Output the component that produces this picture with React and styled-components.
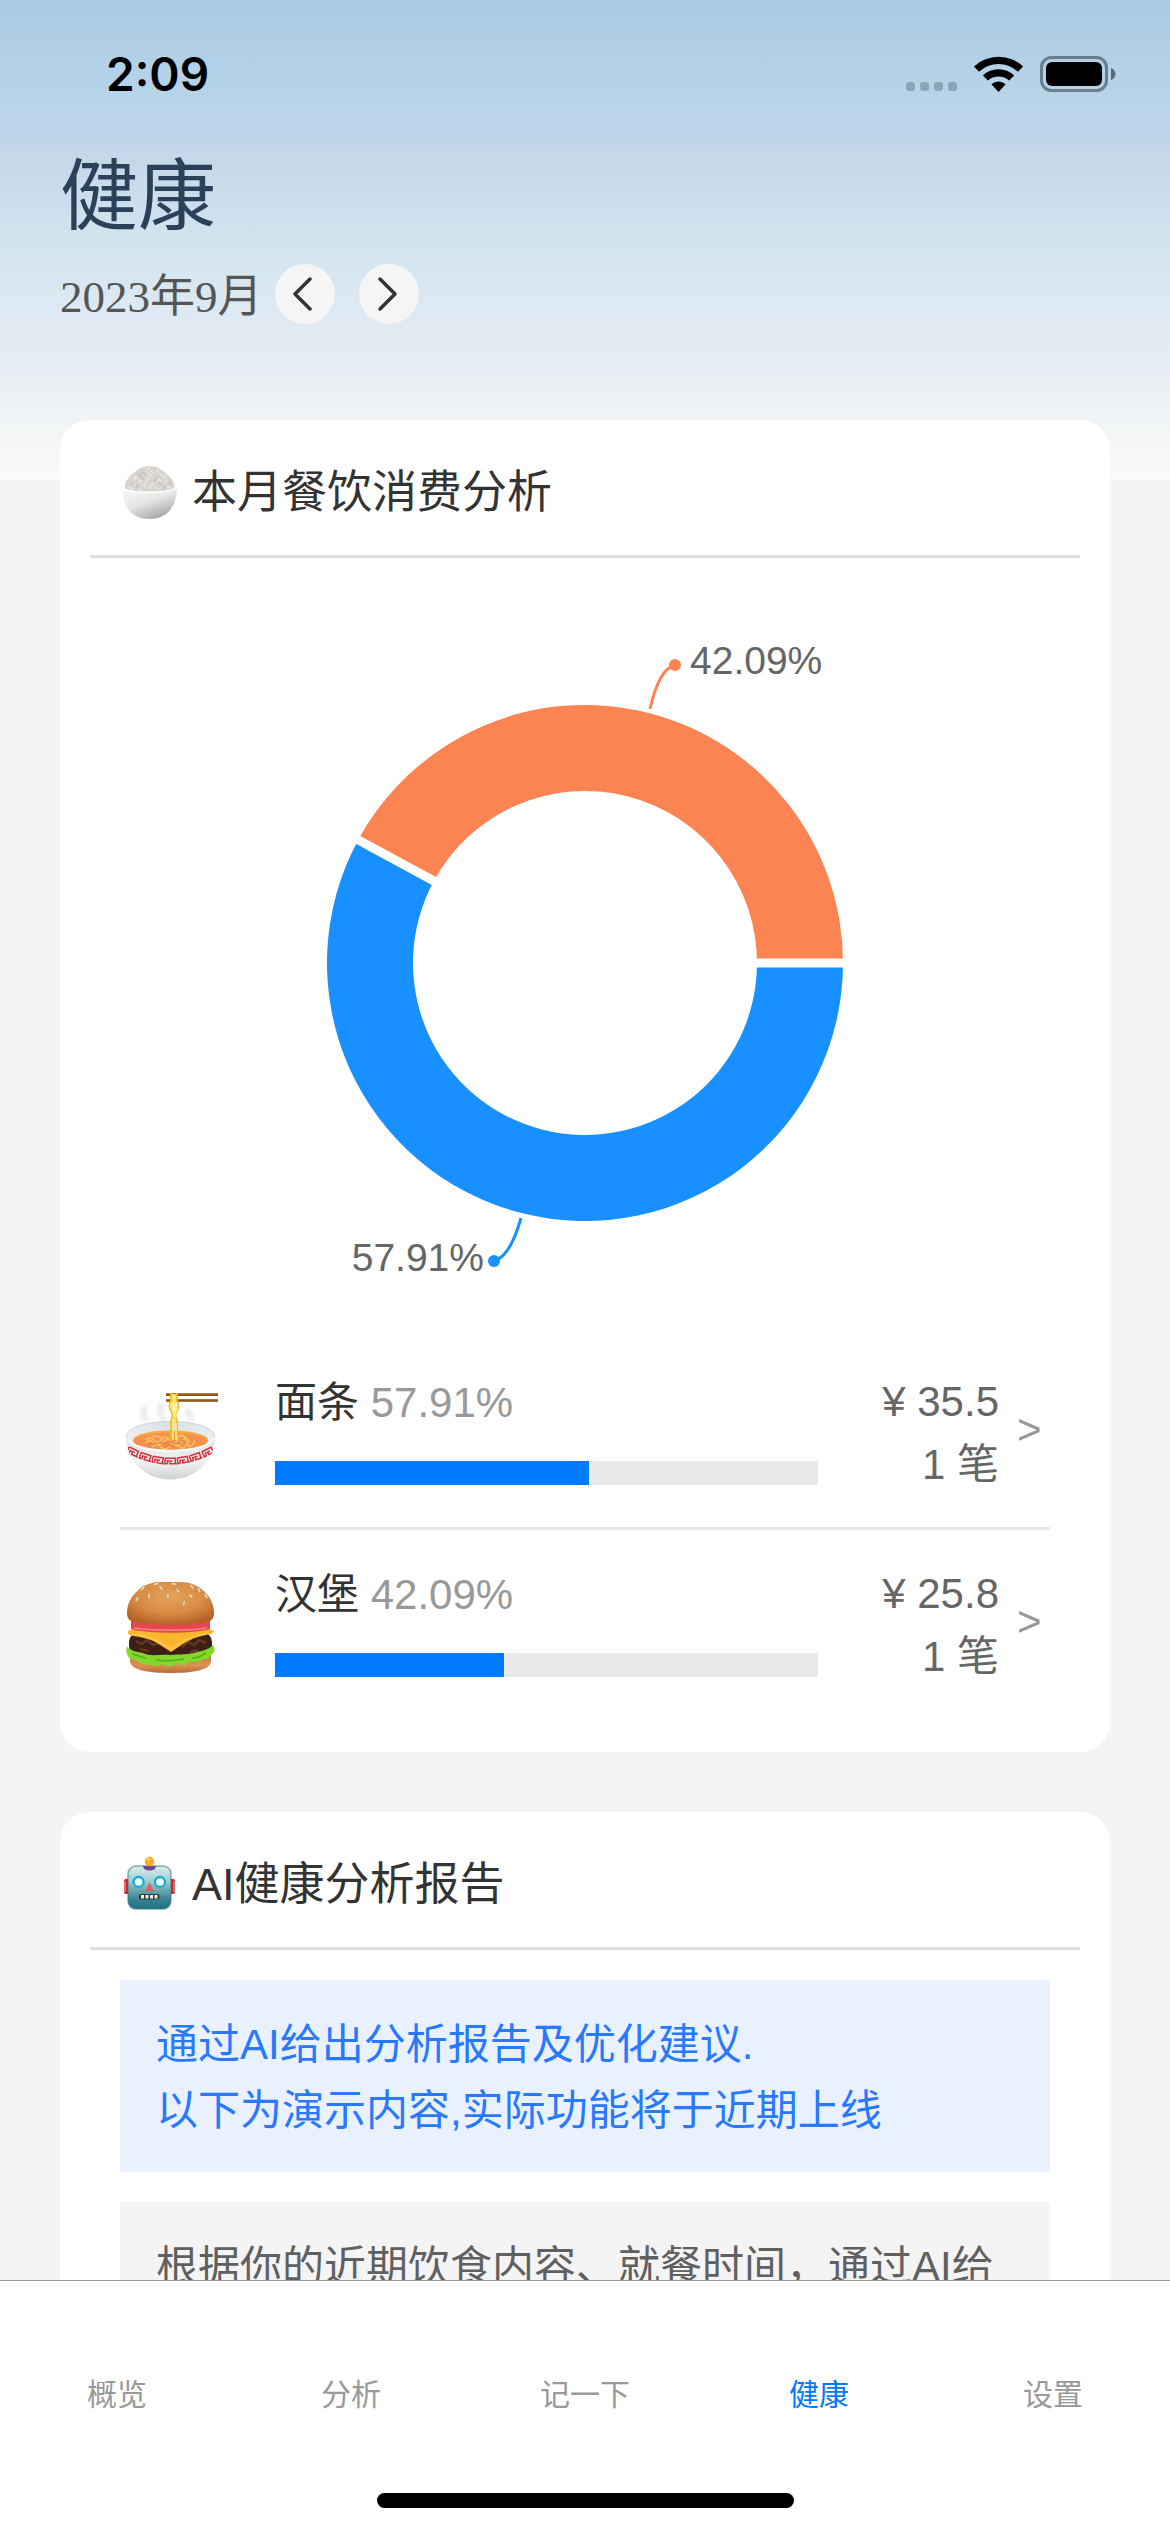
import React from 'react';
import styled, { createGlobalStyle } from 'styled-components';

const sans = `"Liberation Sans", "Noto Sans CJK SC", sans-serif`;

const GlobalStyle = createGlobalStyle`
  * { box-sizing: border-box; }
  body {
    margin: 0;
    background: #f4f4f4;
    font-family: ${sans};
    font-weight: 400;
  }
  h1, h2, p, ul { margin: 0; padding: 0; font-weight: inherit; }
  ul { list-style: none; }
  a { color: inherit; text-decoration: none; }
  svg { display: block; flex: none; }
`;

const Screen = styled.div`
  display: flex;
  flex-direction: column;
  height: 100vh;
`;

const Content = styled.main`
  flex: 1;
  min-height: 0;
  overflow-y: auto;
  scrollbar-width: none;
  padding: 0 60px 60px;
  background: linear-gradient(#a9cae4, #b7d4e9 20%, #bfd4ea 27%, #c4d8e8 33%, #d1e4ef 50%, #e2ebf4 71%, #e7edf6 77%, #ecf0f3 81%, #fafafa) 0 0 / 100% 480px no-repeat;
`;

const StatusBar = styled.div`
  display: flex;
  align-items: center;
  justify-content: space-between;
  height: 148px;
  margin: 0 -6px 0 46px;
`;

const Time = styled.time`
  font: 600 46px/60px Inter, sans-serif;
  color: #000;
`;

const StatusIcons = styled.div`
  display: flex;
  align-items: center;
  gap: 17px;
`;

const Title = styled.h1`
  padding-top: 3px;
  font-size: 78px;
  line-height: 92px;
  color: #2b4059;
`;

const MonthRow = styled.div`
  display: flex;
  align-items: center;
  margin: 21px 0 96px;
  gap: 24px;
`;

const Month = styled.span`
  margin-right: -12px;
  padding-top: 6px;
  font: 45px/54px "Liberation Serif", "Noto Sans CJK SC", serif;
  color: #555;
`;

const RoundButton = styled.button`
  display: flex;
  align-items: center;
  justify-content: center;
  width: 60px;
  height: 60px;
  padding: 0;
  border: 0;
  border-radius: 50%;
  background: #f5f5f5;
`;

const Card = styled.section`
  margin-bottom: 60px;
  padding: 0 30px 33px;
  border-radius: 30px;
  background: #fff;
`;

const CardHeader = styled.header`
  display: flex;
  align-items: center;
  gap: 12px;
  padding: 42px 30px 33px;
  border-bottom: 3px solid #ddd;
`;

const CardTitle = styled.h2`
  padding-top: 2px;
  font-size: 45px;
  line-height: 58px;
  color: #333;
`;

const CardBody = styled.div`
  padding: 0 30px;
`;

const Chart = styled.svg`
  width: 100%;
  height: auto;
  text {
    font-size: 39px;
    fill: #666;
  }
`;

const FoodItem = styled.li`
  & + & { border-top: 3px solid #e8e8e8; }
`;

const FoodLink = styled.a`
  display: flex;
  align-items: center;
  height: 189px;
  font-size: 42px;
  line-height: 63px;
  color: #666;
`;

const FoodMain = styled.div`
  flex: 1;
  margin-left: 55px;
  padding-bottom: 9px;
`;

const FoodName = styled.p`
  margin-bottom: 27px;
  color: #333;
`;

const Percent = styled.span`
  color: #999;
`;

const Track = styled.div`
  height: 24px;
  background: #eaeaea;
`;

const Fill = styled.div`
  height: 100%;
  background: #007aff;
`;

const Amount = styled.div`
  width: 181px;
  text-align: right;
`;

const More = styled.span`
  width: 51px;
  padding: 0 0 6px 18px;
  color: #999;
`;

const Note = styled.p`
  margin-top: 30px;
  padding: 32px 36px 28px;
  font-size: 42px;
  line-height: 66px;
  color: ${(p) => (p.$info ? '#2979ff' : '#606060')};
  background: ${(p) => (p.$info ? '#e9f1ff' : '#f4f4f4')};
`;

const TabBar = styled.nav`
  border-top: 1px solid #999;
  background: #fff;
`;

const Tabs = styled.div`
  display: flex;
  padding-top: 84px;
`;

const Tab = styled.a`
  flex: 1;
  text-align: center;
  font-size: 30px;
  line-height: 60px;
  color: ${(p) => (p.$active ? '#007aff' : '#999')};
`;

const HomeIndicator = styled.div`
  width: 417px;
  height: 15px;
  margin: 68px auto 24px;
  border-radius: 8px;
  background: #000;
`;

const SignalDots = () => (
  <svg width="51" height="36" fill="#000" fillOpacity="0.22">
    {[0, 14, 28, 42].map((x) => (
      <rect key={x} x={x} y="26" width="9" height="9" rx="3" />
    ))}
  </svg>
);

const Wifi = () => (
  <svg width="49" height="36" viewBox="0 0 49 36">
    <path d="M0 10.5a35.5 35.5 0 0 1 49 0l-5 5.2a28.3 28.3 0 0 0-39 0z" />
    <path d="M8.8 19.4a22.8 22.8 0 0 1 31.4 0l-5.1 5.2a15.6 15.6 0 0 0-21.2 0z" />
    <path d="M17.4 28.2a10.6 10.6 0 0 1 14.2 0L24.500 36z" />
  </svg>
);

const Battery = () => (
  <svg width="76" height="36" viewBox="0 0 76 36">
    <rect x="1.500" y="1.500" width="65" height="33" rx="10" fill="none" stroke="#000" strokeOpacity="0.4" strokeWidth="3" />
    <rect x="6" y="6" width="56" height="24" rx="6" />
    <path d="M71 12c6 2 6 10 0 12z" fillOpacity="0.5" />
  </svg>
);

const Chevron = ({ d }) => (
  <svg width="24" height="36" fill="none" stroke="#333" strokeWidth="3.500" strokeLinecap="round" strokeLinejoin="round">
    <path d={d} />
  </svg>
);

const riceGrains = [
  [12, 20], [16, 14], [20, 19], [24, 10], [28, 16], [33, 9], [37, 15], [42, 12], [46, 19], [41, 21],
  [33, 21], [25, 23], [17, 24], [49, 24], [29, 6], [20, 12], [38, 8], [11, 25], [44, 25], [37, 25],
  [14, 17], [22, 15], [26, 20], [31, 12], [35, 18], [40, 17], [45, 15], [50, 20], [30, 25], [21, 27],
];

const RiceBowl = () => (
  <svg width="60" height="60" viewBox="0 0 60 60">
    <defs>
      <linearGradient id="rice-bowl" x1="0" y1="0" x2="0.600" y2="1">
        <stop offset="0" stopColor="#fbfbfb" />
        <stop offset="0.550" stopColor="#e6e6e6" />
        <stop offset="1" stopColor="#a8a8a8" />
      </linearGradient>
    </defs>
    <path d="M5 27C4 18 11 13 16 9c8-6 19-7 27 0 5 4 13 10 11 18-6 7-42 7-49 0z" fill="#d8d4cf" />
    {riceGrains.map(([x, y], i) => (
      <path key={i} d={i % 2 ? `M${x - 2} ${y}l3 2` : `M${x - 1} ${y + 2}l2 -3`} stroke={i % 3 ? '#efede9' : '#c2bdb6'} strokeWidth="1.300" strokeLinecap="round" />
    ))}
    <path d="M2 25c6 7 49 7 55 0 0 17-8 32-27.500 32S2 42 2 25z" fill="url(#rice-bowl)" />
    <path d="M2 25c6 7 49 7 55 0" fill="none" stroke="#fff" strokeWidth="1.500" />
  </svg>
);

const Robot = () => (
  <svg width="60" height="60" viewBox="0 0 60 60">
    <defs>
      <linearGradient id="robot-face" x1="0" y1="0" x2="0" y2="1">
        <stop offset="0" stopColor="#d8eeec" />
        <stop offset="0.350" stopColor="#a4cccd" />
        <stop offset="0.750" stopColor="#3b8795" />
        <stop offset="1" stopColor="#1c7180" />
      </linearGradient>
    </defs>
    <rect x="4" y="25" width="51" height="15" rx="2" fill="#b82630" />
    <path d="M5 27v11M54 27v11" stroke="#e9676b" strokeWidth="2" />
    <rect x="8" y="12" width="43" height="43" rx="8" fill="url(#robot-face)" stroke="#3c7c84" strokeOpacity="0.600" strokeWidth="1.500" />
    <path d="M23 12h13c0 3-3 4.500-6.500 4.500S23 15 23 12z" fill="#65488e" />
    <circle cx="29.500" cy="7.500" r="4.700" fill="#ffa91b" />
    <circle cx="28.500" cy="5.500" r="1.800" fill="#ffd96b" />
    {[18.6, 40].map((x) => (
      <circle key={x} cx={x} cy="28" r="5" fill="#f2ffff" stroke="#12add3" strokeWidth="2.300" />
    ))}
    <path d="M29.500 28.500L33.700 37h-8.400z" fill="#e45d5c" />
    <rect x="19" y="40" width="20.500" height="5.500" rx="2" fill="#2b3b3c" />
    <path d="M21 42.800h17" stroke="#f4f1df" strokeWidth="3.500" strokeDasharray="3 1.500" />
  </svg>
);

const meander = [13, 25.5, 38, 50.5, 63, 75.5, 88].map((x) => {
  const t = (x - 50.5) / 43;
  return { x, y: 78 - 12 * t * t, angle: -Math.atan((24 * t) / 43) * (180 / Math.PI) };
});

const Noodles = () => (
  <svg width="100" height="100" viewBox="0 0 100 100">
    <defs>
      <linearGradient id="noodle-bowl" x1="0" y1="0" x2="0" y2="1">
        <stop offset="0" stopColor="#dfe4e7" />
        <stop offset="0.600" stopColor="#f0f1f1" />
        <stop offset="1" stopColor="#cfd2d4" />
      </linearGradient>
      <linearGradient id="noodle-rim" x1="0" y1="0" x2="1" y2="0">
        <stop offset="0" stopColor="#eef0f2" />
        <stop offset="0.500" stopColor="#dcdfe3" />
        <stop offset="1" stopColor="#eceef0" />
      </linearGradient>
      <clipPath id="noodle-wall">
        <path d="M6 53c0 24 18 43.500 44.500 43.500S95 77 95 53z" />
      </clipPath>
      <filter id="steam-blur"><feGaussianBlur stdDeviation="2" /></filter>
    </defs>
    <g fill="none" stroke="#c9cbd0" strokeWidth="5" strokeOpacity="0.450" filter="url(#steam-blur)">
      <path d="M26 22c-5 6-2 10 0 16M43 20c-5 6-3 12 2 18M66 26c5 5 4 8 5 12" />
    </g>
    <path d="M6 53c0 24 18 43.500 44.500 43.500S95 77 95 53z" fill="url(#noodle-bowl)" />
    <ellipse cx="50.500" cy="53" rx="44" ry="14.500" fill="url(#noodle-rim)" stroke="#c8d2d7" strokeWidth="1" />
    <ellipse cx="50.500" cy="57.500" rx="37.500" ry="9.500" fill="#f4914d" />
    <path d="M14 56c9-10 64-10 73 0" fill="none" stroke="#f7ab3e" strokeWidth="2" />
    <g fill="none" stroke="#f9c45f" strokeWidth="1.300">
      <path d="M26 57q4-4 8 0t8-1 8 2 8-2 8 2 9-1M25 60q5-4 9 0t9-1 9 1 9-1 9 1M32 64q5-4 9 0t9-1 9 0 8-2M32 54q4-2 7 0t6 0M58 54q5-2 9 1" />
    </g>
    <g fill="none" stroke="#d9703a" strokeWidth="0.900">
      <path d="M28 62l4-2 5 2M39 59l6 2 4-3 6 3 6-1M45 64l5-2 6 2M61 57l5 2" />
    </g>
    <path d="M7 55c6 17 81 17 87 0" fill="none" stroke="#f9fbfb" strokeWidth="2" />
    <g clipPath="url(#noodle-wall)">
      {meander.map(({ x, y, angle }) => (
        <path
          key={x}
          d="M-5.500-2.800H4.800V2.800H-.500V0H2M-5.500-2.800V2.800H-3M-3 2.800V-.200H-1.500M4.800 2.800H6.500"
          transform={`translate(${x} ${y}) rotate(${angle})`}
          fill="none"
          stroke="#d5303c"
          strokeWidth="1.500"
        />
      ))}
    </g>
    <path d="M46 10.300h52v2.700H46zM46 16h52v2.700H46z" fill="#87500f" />
    <path d="M46 11h52M46 16.700h52" stroke="#b78445" strokeWidth="0.800" />
    <g fill="none" strokeWidth="1.900">
      <path d="M51 10v8q-3 5 0 10t0 10v18M57 10v8q3 5 0 10t0 10v18" stroke="#edc12f" />
      <path d="M53 11v9q-2 5 1 9t-1 10v18M55 11v11q3 5 0 9t1 10v16" stroke="#ffe768" />
    </g>
  </svg>
);

const seeds = [[36, 9, 80], [54, 9, 100], [23, 13, 40], [41, 13, -35], [29, 21, 10], [48, 21, 0], [17, 24, 25], [58, 16, -45], [72, 12, -35], [71, 21, -40], [64, 28, 10], [86, 21, -35], [79, 15, -20]];

const Burger = () => (
  <svg width="100" height="100" viewBox="0 0 100 100">
    <defs>
      <radialGradient id="bun-top" cx="0.500" cy="0.350" r="0.650">
        <stop offset="0" stopColor="#e5a35b" />
        <stop offset="0.600" stopColor="#d88b43" />
        <stop offset="1" stopColor="#b56428" />
      </radialGradient>
      <linearGradient id="bun-base" x1="0" y1="0" x2="0" y2="1">
        <stop offset="0" stopColor="#c97637" />
        <stop offset="0.600" stopColor="#dc9252" />
        <stop offset="1" stopColor="#b96d38" />
      </linearGradient>
    </defs>
    <path d="M10 78h81v8c0 9-18 12-40.500 12S10 95 10 86z" fill="url(#bun-base)" />
    <rect x="9" y="57" width="83" height="24" rx="10" fill="#3c2016" />
    <path d="M16 66l6 3 5-4 6 5 7-2M62 72l6-5 6 3 5-5 7 3M20 74l9 2M70 77l8-2" fill="none" stroke="#6b3a24" strokeWidth="2" />
    <path d="M7 71c2 4 9 6 16 7 7 4 17 1 27 2 11-1 19 0 27-3 6-1 12-3 16-7 3 5 1 8-2 10-2 6-5 3-9 5-5 5-9 0-13 2-5 5-9 2-13 2-6 4-11 2-15 0-6 4-9 1-14 0-7 2-8-4-13-4-6-1-9-7-7-14z" fill="#83d72c" />
    <path d="M12 79c6 2 10 2 14 5M36 85c9 1 18 1 28-1M72 83c6 1 10-3 14-5" fill="none" stroke="#57aa19" strokeWidth="1.500" />
    <path d="M8 56c9-6 77-6 86 0-1 4-7 3-12 5-9 2-14 5-19 8l-12 8-14-9c-7-4-15-6-24-7-4-1-6-2-5-5z" fill="#fbb62e" />
    <path d="M12 59c10 1 18 3 26 7l13 8 12-8c7-4 13-6 24-7" fill="none" stroke="#ffcf57" strokeWidth="1.200" />
    <path d="M11 46h79v8c-16 5-63 5-79 0z" fill="#e6484f" />
    <path d="M14 53c20 3 53 3 73 0" fill="none" stroke="#fb858b" strokeWidth="1.500" />
    <path d="M7 38C7 20 24 7 40 7h21c16 0 33 13 33 31 0 4-1 6-4 8-14 5-65 5-79 0-3-2-4-4-4-8z" fill="url(#bun-top)" />
    {seeds.map(([x, y, r], i) => (
      <ellipse key={i} cx={x} cy={y} rx="1.500" ry="3" transform={`rotate(${r} ${x} ${y})`} fill="#f0d2a6" stroke="#b8783f" strokeWidth="0.500" />
    ))}
  </svg>
);

const CX = 465;
const CY = 405;
const OUTER = 258;
const INNER = 172;

const point = (radius, share) => {
  const angle = share * Math.PI * 2;
  return `${CX + radius * Math.cos(angle)} ${CY + radius * Math.sin(angle)}`;
};

const slice = (from, to) => {
  const large = to - from > 0.5 ? 1 : 0;
  return `M${point(OUTER, from)}A${OUTER} ${OUTER} 0 ${large} 1 ${point(OUTER, to)}L${point(INNER, to)}A${INNER} ${INNER} 0 ${large} 0 ${point(INNER, from)}Z`;
};

const foods = [
  { name: '面条', percent: 57.91, price: '35.5', Icon: Noodles },
  { name: '汉堡', percent: 42.09, price: '25.8', Icon: Burger },
];

const tabs = ['概览', '分析', '记一下', '健康', '设置'];

const Donut = ({ split }) => (
  <Chart viewBox="0 0 930 780" role="img" aria-label="本月餐饮消费分析">
    <path d={slice(0, split)} fill="#1890ff" />
    <path d={slice(split, 1)} fill="#fc8452" />
    <path d={`M${point(165, 0)}L${point(265, 0)}M${point(165, split)}L${point(265, split)}`} stroke="#fff" strokeWidth="9" />
    <path d="M530 151Q539 111 555 107" fill="none" stroke="#fc8452" strokeWidth="3" />
    <circle cx="555" cy="107" r="6" fill="#fc8452" />
    <text x="570" y="116">42.09%</text>
    <path d="M401 660Q390 699 374 703" fill="none" stroke="#1890ff" strokeWidth="3" />
    <circle cx="374" cy="703" r="6" fill="#1890ff" />
    <text x="364" y="713" textAnchor="end">57.91%</text>
  </Chart>
);

export default function App() {
  return (
    <Screen>
      <GlobalStyle />
      <Content>
        <StatusBar>
          <Time>2:09</Time>
          <StatusIcons>
            <SignalDots />
            <Wifi />
            <Battery />
          </StatusIcons>
        </StatusBar>
        <Title>健康</Title>
        <MonthRow>
          <Month>2023年9月</Month>
          <RoundButton type="button" aria-label="上个月">
            <Chevron d="M17 3L2 18l15 15" />
          </RoundButton>
          <RoundButton type="button" aria-label="下个月">
            <Chevron d="M3 3l15 15L3 33" />
          </RoundButton>
        </MonthRow>

        <Card>
          <CardHeader>
            <RiceBowl />
            <CardTitle>本月餐饮消费分析</CardTitle>
          </CardHeader>
          <CardBody>
            <Donut split={0.5791} />
            <ul>
              {foods.map(({ name, percent, price, Icon }) => (
                <FoodItem key={name}>
                  <FoodLink href="#">
                    <Icon />
                    <FoodMain>
                      <FoodName>
                        {name} <Percent>{percent}%</Percent>
                      </FoodName>
                      <Track>
                        <Fill style={{ width: `${percent}%` }} />
                      </Track>
                    </FoodMain>
                    <Amount>
                      <p>¥ {price}</p>
                      <p>1 笔</p>
                    </Amount>
                    <More>&gt;</More>
                  </FoodLink>
                </FoodItem>
              ))}
            </ul>
          </CardBody>
        </Card>

        <Card>
          <CardHeader>
            <Robot />
            <CardTitle>AI健康分析报告</CardTitle>
          </CardHeader>
          <CardBody>
            <Note $info>
              通过AI给出分析报告及优化建议.
              <br />
              以下为演示内容,实际功能将于近期上线
            </Note>
            <Note>根据你的近期饮食内容、就餐时间，通过AI给</Note>
          </CardBody>
        </Card>
      </Content>

      <TabBar>
        <Tabs>
          {tabs.map((label) => (
            <Tab key={label} href="#" $active={label === '健康'} aria-current={label === '健康' ? 'page' : undefined}>
              {label}
            </Tab>
          ))}
        </Tabs>
        <HomeIndicator />
      </TabBar>
    </Screen>
  );
}
